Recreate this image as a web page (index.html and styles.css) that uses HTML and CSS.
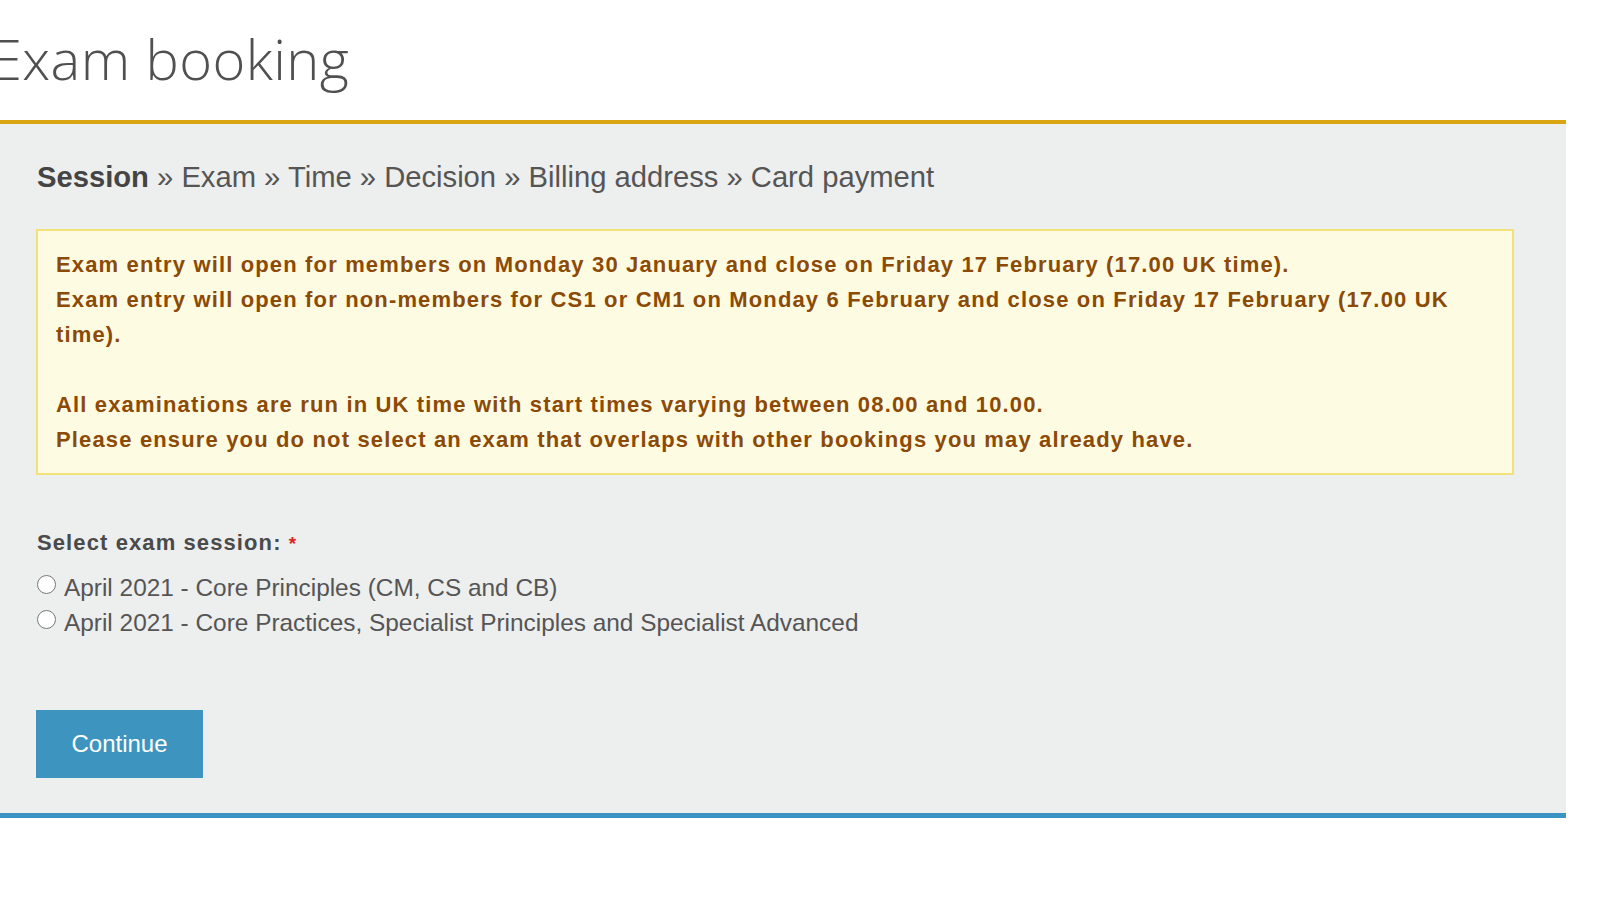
FILE: index.html
```html
<!DOCTYPE html>
<html lang="en">
<head>
  <meta charset="UTF-8" />
  <title>Exam booking</title>
  <link rel="stylesheet" href="styles.css">
</head>
<body>
  <div class="page-header">
    <h1>Exam booking</h1>
  </div>

  <div class="panel">
    <div class="steps">
      <strong>Session</strong> &raquo; Exam &raquo; Time &raquo; Decision &raquo; Billing address &raquo; Card payment
    </div>

    <!-- entry window notice -->
    <div class="notice">
      Exam entry will open for members on Monday 30 January and close on Friday 17 February (17.00 UK time).<br>
      Exam entry will open for non-members for CS1 or CM1 on Monday 6 February and close on Friday 17 February (17.00 UK time).<br>
      <br>
      All examinations are run in UK time with start times varying between 08.00 and 10.00.<br>
      Please ensure you do not select an exam that overlaps with other bookings you may already have.
    </div>

    <div class="field">
      <div class="field-label">Select exam session: <span class="required">*</span></div>
      <label class="option"><input type="radio" name="session" value="cp" /> April 2021 - Core Principles (CM, CS and CB)</label>
      <label class="option"><input type="radio" name="session" value="sp" /> April 2021 - Core Practices, Specialist Principles and Specialist Advanced</label>
    </div>

    <button class="btn">Continue</button>
  </div>
</body>
</html>
```

FILE: styles.css
```css
body {
  margin: 0;
  background: #fff;
  font-family: "Liberation Sans", Arial, sans-serif;
  overflow: hidden;
}

.page-header {
  width: 1566px;
  height: 120px;
  border-bottom: 4px solid #d9a611;
}

.page-header h1 {
  margin: 0 0 0 -9px;
  padding-top: 22px;
  font-family: "Open Sans", sans-serif;
  font-weight: 300;
  font-size: 56px;
  line-height: 72px;
  color: #505050;
  letter-spacing: 0.4px;
}

.panel {
  width: 1566px;
  box-sizing: border-box;
  background: #edeeee;
  padding: 36px 52px 35px 36px;
  border-bottom: 5px solid #3a93c3;
}

.steps {
  font-size: 29.2px;
  line-height: 34px;
  color: #555;
  padding-left: 1px;
}

.steps strong {
  color: #444;
}

.notice {
  margin-top: 35px;
  background: #fefbe3;
  border: 2px solid #f2e176;
  padding: 16px 18px;
  font-size: 22px;
  font-weight: bold;
  letter-spacing: 1.15px;
  line-height: 35px;
  color: #8b4a06;
}

.field {
  margin-top: 52px;
  padding-left: 1px;
}

.field-label {
  font-size: 22px;
  font-weight: bold;
  letter-spacing: 1.1px;
  color: #4a4a4a;
  line-height: 32px;
  margin-bottom: 10px;
}

.required {
  color: #d9261c;
  font-size: 19px;
}

.option {
  display: flex;
  align-items: center;
  gap: 8px;
  font-size: 24.4px;
  line-height: 35px;
  color: #555;
}

.option input {
  width: 19px;
  height: 19px;
  margin: -6px 0 0 0;
}

.btn {
  margin-top: 70px;
  width: 167px;
  height: 68px;
  background: #3d94bf;
  color: #fff;
  border: none;
  font-family: "Liberation Sans", Arial, sans-serif;
  font-size: 24px;
  cursor: pointer;
}

.btn:hover {
  background: #317ca3;
}
```
